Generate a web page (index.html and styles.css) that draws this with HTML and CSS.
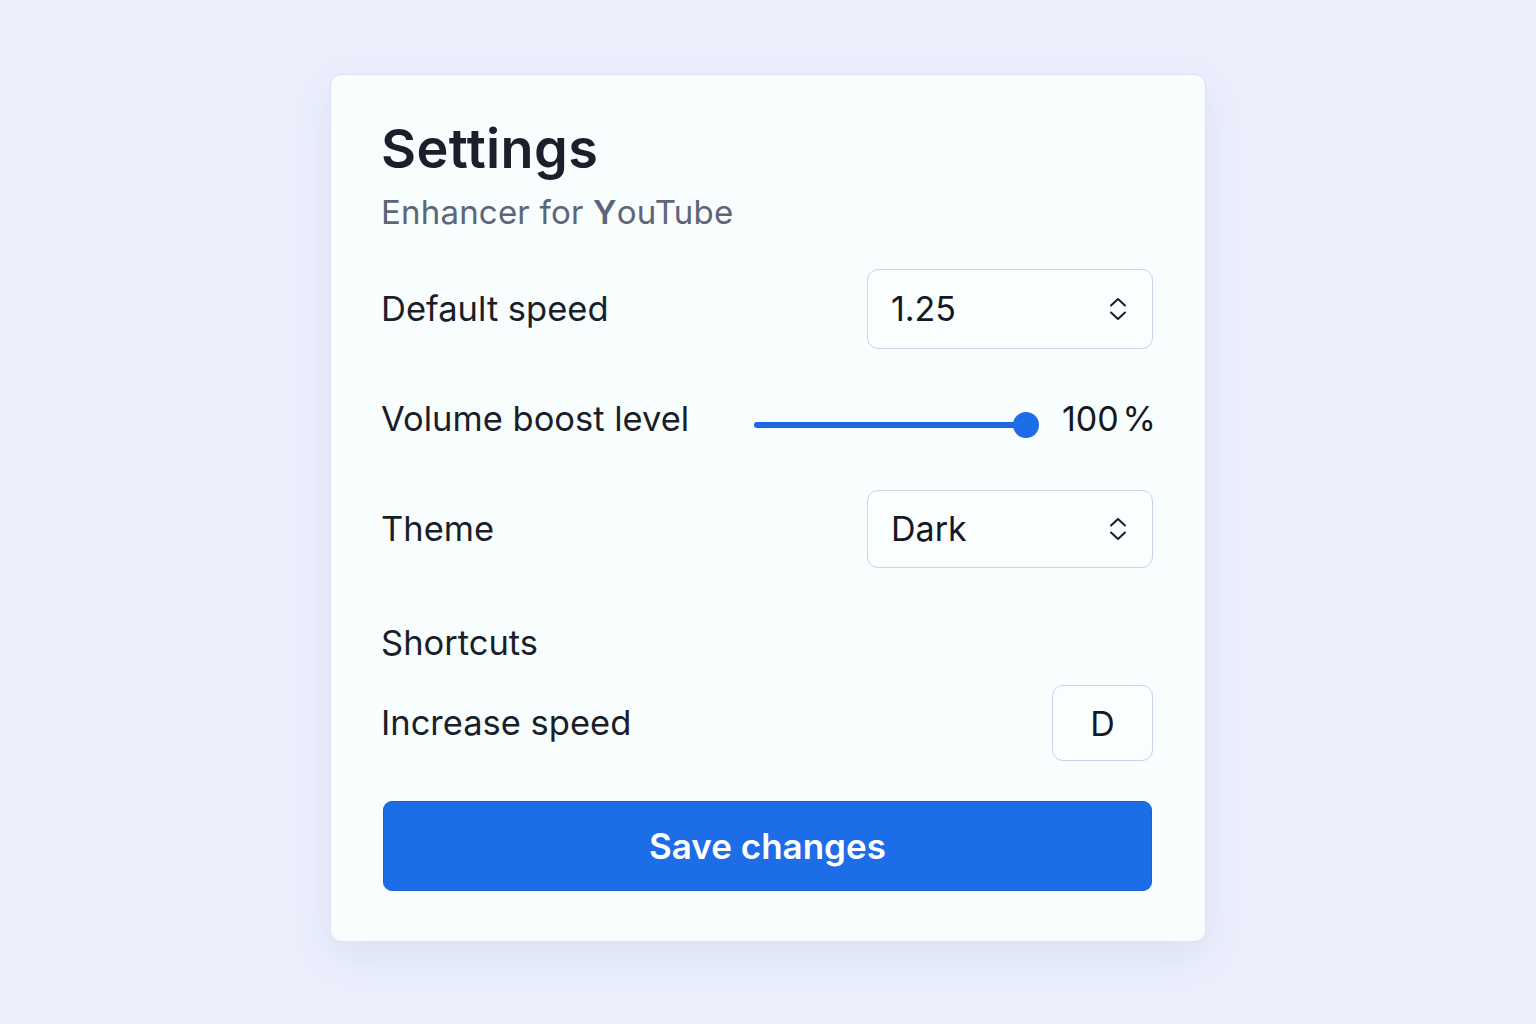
FILE: index.html
```html
<!DOCTYPE html>
<html lang="en">
<head>
<meta charset="utf-8">
<title>Settings</title>
<link rel="stylesheet" href="styles.css">
</head>
<body>
<main class="card">
  <header class="head">
    <h1 class="title">Settings</h1>
    <p class="subtitle">Enhancer for <span class="brand">Y</span>ouTube</p>
  </header>

  <div class="row row-speed">
    <span class="label">Default speed</span>
    <div class="select">
      <span class="select-value">1.25</span>
      <svg class="chev" viewBox="0 0 20 26" width="20" height="26" aria-hidden="true">
        <path d="M3 9.5 L10 3 L17 9.5" fill="none" stroke="#1a1e2a" stroke-width="2" stroke-linecap="round" stroke-linejoin="round"/>
        <path d="M3 16.5 L10 23 L17 16.5" fill="none" stroke="#1a1e2a" stroke-width="2" stroke-linecap="round" stroke-linejoin="round"/>
      </svg>
    </div>
  </div>

  <div class="row row-volume">
    <span class="label">Volume boost level</span>
    <div class="range-wrap">
      <div class="range">
        <div class="range-fill"></div>
        <div class="range-thumb"></div>
      </div>
      <span class="range-value">100<span class="pct">%</span></span>
    </div>
  </div>

  <div class="row row-theme">
    <span class="label">Theme</span>
    <div class="select select-theme">
      <span class="select-value">Dark</span>
      <svg class="chev" viewBox="0 0 20 26" width="20" height="26" aria-hidden="true">
        <path d="M3 9.5 L10 3 L17 9.5" fill="none" stroke="#1a1e2a" stroke-width="2" stroke-linecap="round" stroke-linejoin="round"/>
        <path d="M3 16.5 L10 23 L17 16.5" fill="none" stroke="#1a1e2a" stroke-width="2" stroke-linecap="round" stroke-linejoin="round"/>
      </svg>
    </div>
  </div>

  <h2 class="section">Shortcuts</h2>

  <div class="row row-key">
    <span class="label">Increase speed</span>
    <div class="key">D</div>
  </div>

  <button class="save" type="button">Save changes</button>
</main>
</body>
</html>
```

FILE: styles.css
```css
* { box-sizing: border-box; }

html, body {
  margin: 0;
  padding: 0;
}

body {
  background: #ecf0fd;
  font-family: Inter, "Noto Sans", "Liberation Sans", sans-serif;
  color: #1a1e2a;
  min-height: 1024px;
  padding-top: 74px;
}

.card {
  width: 876px;
  height: 868px;
  margin: 0 auto;
  background: #f8fdfd;
  border: 1px solid #dde1f1;
  border-radius: 11px;
  box-shadow: 0 14px 44px rgba(90, 100, 170, 0.12);
  padding: 44px 52px 0 51px;
  display: flex;
  flex-direction: column;
}

.head {
  display: flex;
  flex-direction: column;
  margin-left: -1px;
}

.title {
  margin: 0;
  font-size: 54px;
  line-height: 60px;
  font-weight: 600;
  color: #1b1f2b;
  letter-spacing: 0.4px;
}

.subtitle {
  margin: 13px 0 0 0;
  font-size: 33px;
  line-height: 40px;
  font-weight: 400;
  color: #5d6579;
  letter-spacing: 0.2px;
}

.brand {
  font-weight: 600;
  color: #5d6579;
}

.row {
  display: flex;
  align-items: center;
  justify-content: space-between;
  height: 80px;
}

.row-speed { margin-top: 37px; }
.row-volume { margin-top: 30px; }
.row-theme { margin-top: 30px; }

.label {
  font-size: 34.5px;
  line-height: 40px;
  color: #1a1e2a;
  margin-left: -1px;
}

.select {
  width: 286px;
  height: 80px;
  border: 1.5px solid #cbd2e8;
  border-radius: 11px;
  background: #fafeff;
  display: flex;
  align-items: center;
  justify-content: space-between;
  padding: 0 24px 0 23px;
}

.select-theme { height: 78px; }

.select-value {
  font-size: 34px;
  line-height: 40px;
  color: #141824;
}

.chev { display: block; }

.range-wrap {
  display: flex;
  align-items: center;
  gap: 23px;
  margin-right: -3px;
}

.range {
  position: relative;
  width: 285px;
  height: 26px;
  margin-top: 12px;
}

.range-fill {
  position: absolute;
  left: 0;
  right: 13px;
  top: 10px;
  height: 6px;
  border-radius: 3px;
  background: #1b68e0;
}

.range-thumb {
  position: absolute;
  right: 0;
  top: 0;
  width: 26px;
  height: 26px;
  border-radius: 50%;
  background: #1d6ce8;
}

.range-value {
  font-size: 34px;
  line-height: 40px;
  color: #141824;
  white-space: nowrap;
}

.pct {
  margin-left: 4px;
}

.section {
  margin: 54px 0 0 -1px;
  font-size: 34.5px;
  line-height: 40px;
  font-weight: 400;
  color: #1a1e2a;
}

.row-key {
  margin-top: 22px;
  height: 76px;
}

.key {
  width: 101px;
  height: 76px;
  border: 1.5px solid #cbd2e8;
  border-radius: 11px;
  background: #fafeff;
  display: flex;
  align-items: center;
  justify-content: center;
  font-size: 34px;
  color: #141824;
}

.save {
  margin: 40px 1px 0 1px;
  height: 90px;
  border: 1.5px solid #1a5fd8;
  border-radius: 9px;
  background: #1d6ce8;
  color: #ffffff;
  font-family: inherit;
  font-size: 35px;
  font-weight: 600;
  cursor: pointer;
}
```
